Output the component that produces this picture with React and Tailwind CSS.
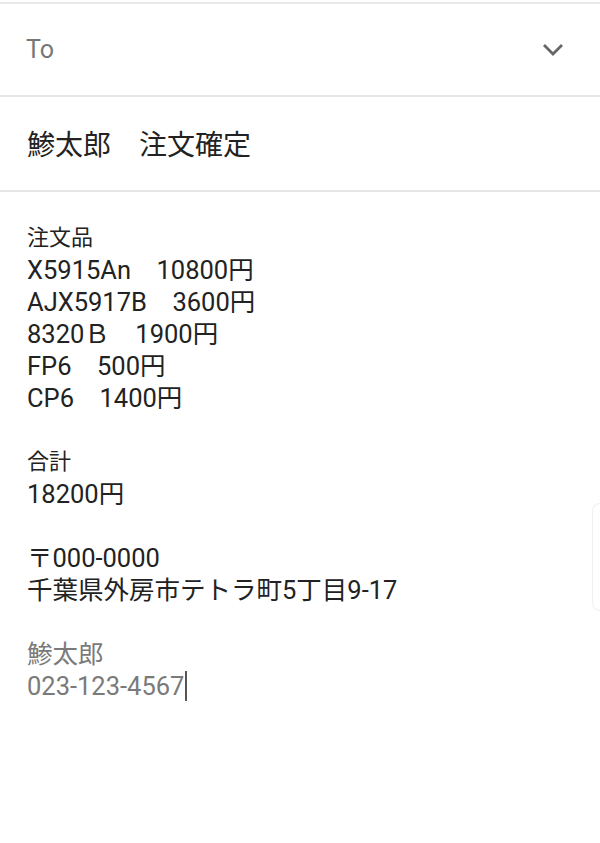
import React from 'react';

const lines = [
  { text: '注文品', cls: 'text-[22px]' },
  { text: 'X5915An　10800円' },
  { text: 'AJX5917B　3600円' },
  { text: '8320Ｂ　1900円' },
  { text: 'FP6　500円' },
  { text: 'CP6　1400円' },
  { text: '' },
  { text: '合計', cls: 'text-[22px]' },
  { text: '18200円' },
  { text: '' },
  { text: '〒000-0000' },
  { text: '千葉県外房市テトラ町5丁目9-17' },
  { text: '' },
];

const ChevronDown = () => (
  <svg width="22" height="14" viewBox="0 0 22 14" fill="none" stroke="#666666" strokeWidth="2.8">
    <path d="M2 2 L11 11 L20 2" />
  </svg>
);

export default function App() {
  return (
    <div
      className="w-[600px] h-[843px] bg-white overflow-hidden relative"
      style={{ fontFamily: 'Roboto, "Noto Sans CJK JP", sans-serif' }}
    >
      <div className="h-[2px] mt-[2px] bg-[#e8e8e8]" />
      <div className="h-[93px] flex items-center justify-between pl-[26px] pr-[36px] border-b-2 border-[#e6e6e6]">
        <span className="text-[25px] text-[#777777]">To</span>
        <ChevronDown />
      </div>
      <div className="h-[95px] flex items-center pl-[27px] pt-[4px] border-b-2 border-[#e6e6e6]">
        <span className="text-[28px] text-[#222222]">鯵太郎　注文確定</span>
      </div>
      <div className="pl-[27px] pt-[30px] text-[25.5px] leading-[32px] text-[#222222]">
        {lines.map((l, i) => (
          <div key={i} className={`h-[32px] whitespace-nowrap ${l.cls || ''}`}>{l.text}</div>
        ))}
        <div className="text-[#7a7a7a]">
          <div className="h-[32px]">鯵太郎</div>
          <div className="h-[32px] flex items-center">
            <span>023-123-4567</span>
            <span className="inline-block w-[2px] h-[30px] bg-[#555555] ml-[1px]" />
          </div>
        </div>
      </div>
      <div className="absolute right-0 top-[503px] w-[8px] h-[108px] rounded-l-[8px] border border-r-0 border-[#f0f0f0]" />
    </div>
  );
}
